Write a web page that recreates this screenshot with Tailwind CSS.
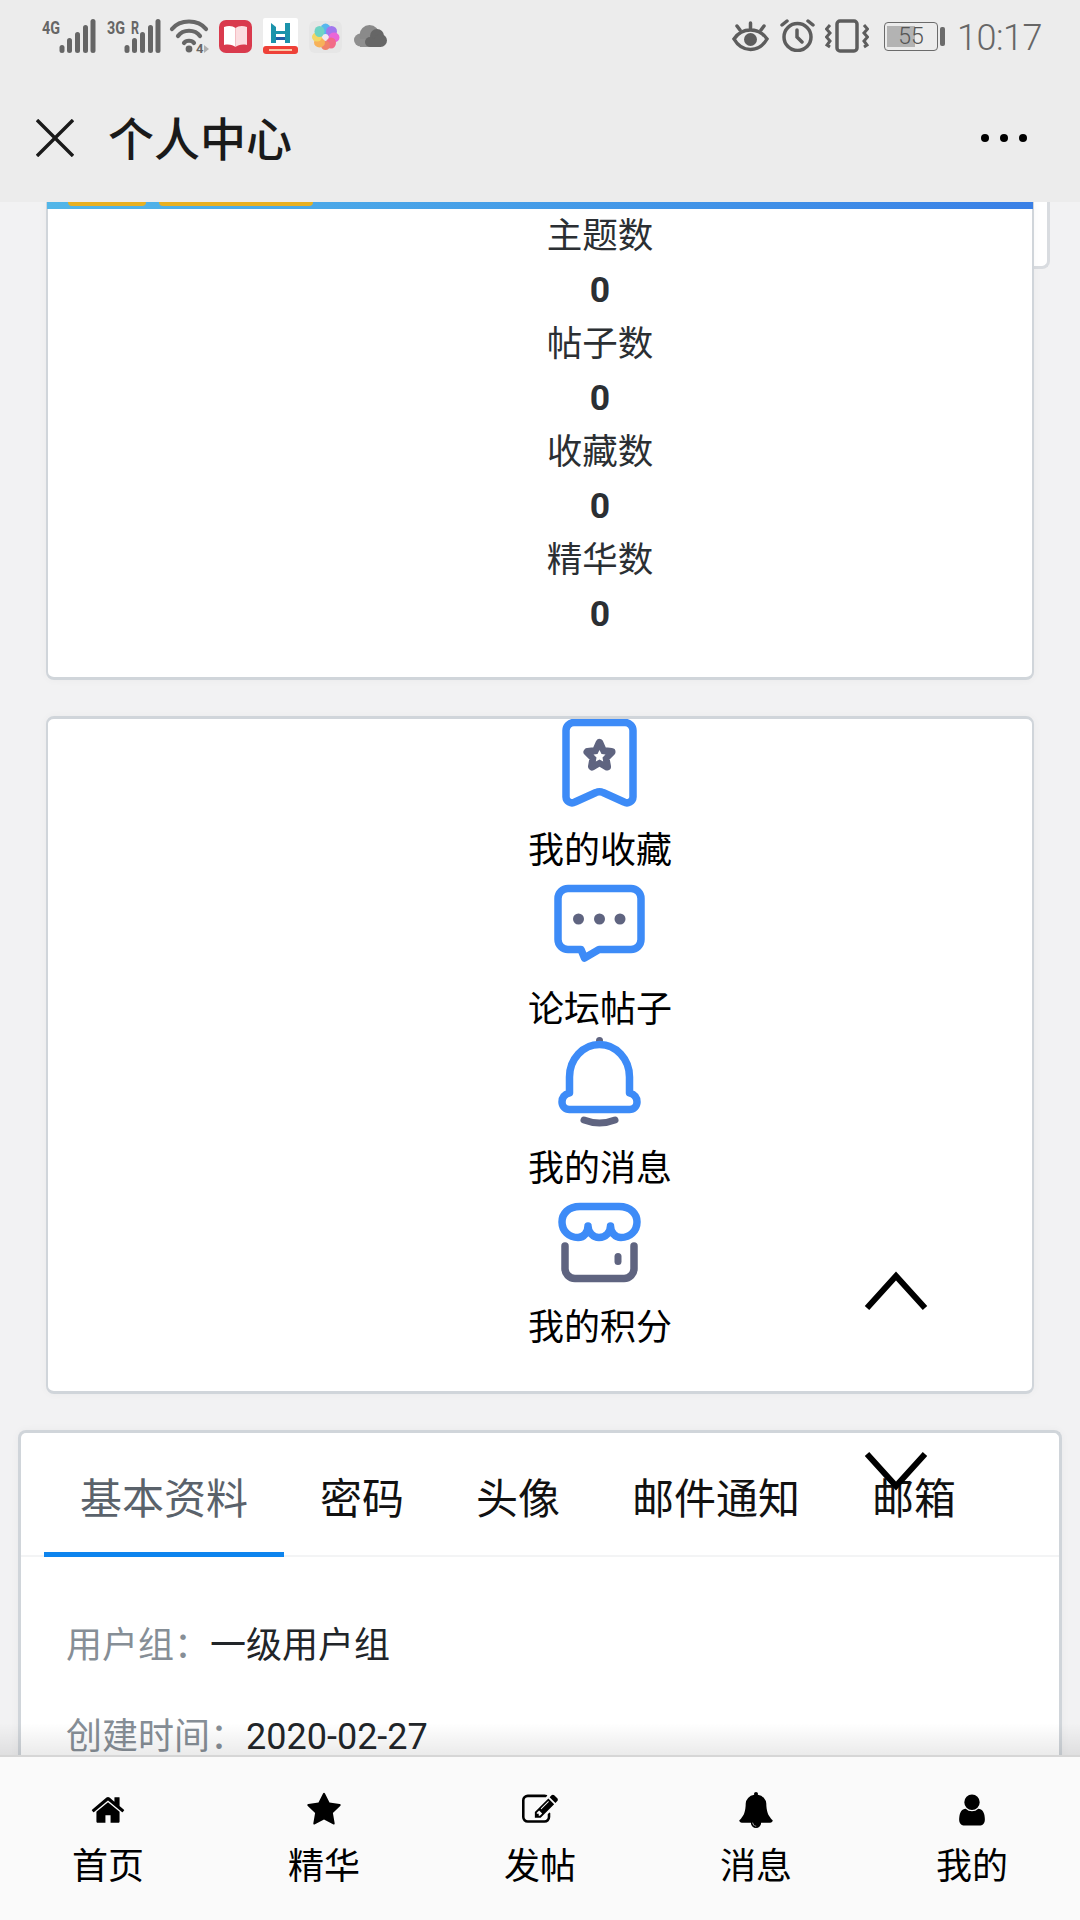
<!doctype html>
<html lang="zh">
<head>
<meta charset="utf-8">
<script src="https://cdn.jsdelivr.net/npm/@tailwindcss/browser@4"></script>
</head>
<body class="m-0">
<div class="relative w-[1080px] h-[1920px] overflow-hidden flex flex-col bg-[#f2f2f3] font-['Roboto','Noto_Sans_CJK_SC',sans-serif]">

  <!-- header -->
  <header class="shrink-0 h-[202px] bg-[#ececec] flex flex-col">
    <div class="h-[72px] flex items-start justify-between pt-[19px] pl-[42px] pr-[38px]">
      <div class="flex items-start">
        <svg class="block overflow-visible" width="54" height="34" viewBox="0 0 54 34" fill="#666"><text x="0" y="14.500" font-size="19" font-weight="700" textLength="18" lengthAdjust="spacingAndGlyphs" font-family="Roboto">4G</text><rect x="17.500" y="26" width="5" height="8" rx="2.500"/><rect x="25" y="19" width="5" height="15" rx="2.500"/><rect x="33" y="13" width="5" height="21" rx="2.500"/><rect x="41" y="6" width="5" height="28" rx="2.500"/><rect x="48.500" y="0" width="5" height="34" rx="2.500"/></svg>
        <svg class="block ml-[11px] overflow-visible" width="53" height="34" viewBox="0 0 53 34" fill="#666"><text x="0" y="14.500" font-size="19" font-weight="700" textLength="18" lengthAdjust="spacingAndGlyphs" font-family="Roboto">3G</text><text x="24" y="14.500" font-size="18" font-weight="700" textLength="8" lengthAdjust="spacingAndGlyphs" font-family="Roboto">R</text><rect x="17.500" y="26" width="5" height="8" rx="2.500"/><rect x="25" y="19" width="5" height="15" rx="2.500"/><rect x="33" y="13" width="5" height="21" rx="2.500"/><rect x="41" y="6" width="5" height="28" rx="2.500"/><rect x="48.500" y="0" width="5" height="34" rx="2.500"/></svg>
        <svg class="block ml-[10px] overflow-visible" width="40" height="34" viewBox="0 0 40 34" fill="none" stroke="#666" stroke-width="4.200" stroke-linecap="round"><path d="M2 10 C10 0 28 0 36 10"/><path d="M8 17 C13 10 25 10 30 17"/><path d="M14 24 C16 21 22 21 24 24"/><circle cx="19" cy="30" r="3.400" fill="#666" stroke="none"/><text x="26" y="33.500" font-size="13" font-weight="700" fill="#666" stroke="none" font-family="Roboto">4</text><path d="M34 26 L39 30 L34 34Z" fill="#b0b0b0" stroke="none"/></svg>
        <svg class="block ml-[9px] mt-[1px]" width="33" height="33" viewBox="0 0 33 33"><rect width="33" height="33" rx="7" fill="#d93a4d"/><path d="M5 7 C10 5 14 6 16.500 8 V27 C14 25 10 24 5 25Z" fill="#fff"/><path d="M16.500 8 C19 6 23 5 28 7 V25 C23 24 19 25 16.500 27Z" fill="#fbdde0"/></svg>
        <svg class="block ml-[11px] -mt-[1px]" width="35" height="36" viewBox="0 0 35 36"><rect width="35" height="36" rx="2" fill="#fff"/><path d="M8 5 L13 9 V25 H8Z M22 5 H27 V25 H22Z M13 13 H22 V16 H13Z" fill="#1b93ab"/><path d="M13 19 H22 V22 H13Z" fill="#1f5fa8"/><rect y="28" width="35" height="8" rx="3" fill="#ee4138"/><rect x="6" y="31" width="23" height="2" fill="#f8c9a8"/></svg>
        <svg class="block ml-[11px] mt-[2px]" width="33" height="32" viewBox="0 0 33 32"><rect width="33" height="32" rx="6" fill="#e6e6e6"/><ellipse cx="16.500" cy="8.500" rx="5" ry="6" fill="#58b7ee"/><ellipse cx="22.500" cy="10.500" rx="5.500" ry="5.500" fill="#a277ee"/><ellipse cx="25" cy="16.500" rx="5.500" ry="5" fill="#ea66d8"/><ellipse cx="22" cy="22" rx="5" ry="5.500" fill="#f26b88"/><ellipse cx="16.500" cy="24.500" rx="4.500" ry="4.500" fill="#f0826a"/><ellipse cx="10.500" cy="21.500" rx="5.500" ry="5" fill="#f7b25a"/><ellipse cx="8" cy="16" rx="5" ry="4.500" fill="#f4d766"/><ellipse cx="10.500" cy="10.500" rx="5" ry="5.500" fill="#6fd3c4"/><circle cx="16.500" cy="16" r="3" fill="#f3e8f0"/></svg>
        <svg class="block ml-[12px] mt-[6px]" width="33" height="22" viewBox="0 0 33 22"><circle cx="6.500" cy="15" r="6.500" fill="#8f8f8f"/><circle cx="15.500" cy="10" r="10" fill="#8a8a8a"/><rect x="6" y="14" width="14" height="8" fill="#8f8f8f"/><circle cx="23" cy="11" r="7" fill="#666"/><circle cx="26.500" cy="15.500" r="6.500" fill="#666"/><circle cx="16" cy="17" r="5" fill="#666"/><rect x="16" y="14" width="11" height="8" fill="#666"/></svg>
      </div>
      <div class="flex items-start">
        <svg class="block mt-[2px]" width="37" height="32" viewBox="0 0 37 32" fill="none" stroke="#5d5d5d" stroke-width="3.500" stroke-linecap="round"><path d="M2 18 C10 6 27 6 35 18 C27 32 10 32 2 18Z"/><circle cx="18.500" cy="18.500" r="6.500" fill="#5d5d5d" stroke="none"/><path d="M18.500 2 V7 M5 5 L8 9 M32 5 L29 9"/></svg>
        <svg class="block ml-[11px]" width="35" height="33" viewBox="0 0 35 33" fill="none" stroke="#5d5d5d" stroke-width="3.500" stroke-linecap="round"><circle cx="17.500" cy="18" r="13.500"/><path d="M17 11 V18 L22 23 M2 6 L7 2 M33 6 L28 2"/></svg>
        <svg class="block ml-[10px]" width="44" height="34" viewBox="0 0 44 34" fill="none" stroke="#5d5d5d" stroke-width="3"><rect x="12" y="2" width="20" height="30" rx="3" stroke-width="3.500"/><path d="M5 6 L1.500 10 L5 14 L1.500 18 L5 22 L2 26 L5 28 M39 6 L42.500 10 L39 14 L42.500 18 L39 22 L42 26 L39 28"/></svg>
        <div class="ml-[15px] mt-[3px] relative w-[54px] h-[29px] rounded-[4px] border-[1.500px] border-[#6b6b6b] flex items-center justify-center">
          <div class="absolute left-[2px] top-[3px] bottom-[3px] w-[28px] bg-[#b3b3b3]"></div>
          <span class="relative text-[23px] leading-none font-light text-[#555]">55</span>
        </div>
        <div class="ml-[2px] mt-[8px] w-[5px] h-[19px] rounded-[2px] bg-[#6b6b6b]"></div>
        <span class="ml-[12px] mt-[-1px] text-[36px] leading-[40px] font-light text-[#666] tracking-[-0.500px]">10:17</span>
      </div>
    </div>
    <div class="flex-1 flex items-start pl-[36px] pr-[38px] pt-[47px] relative">
      <svg class="block" width="38" height="38" viewBox="0 0 38 38" fill="none" stroke="#1a1a1a" stroke-width="3.400"><path d="M1 1 L37 37 M37 1 L1 37"/></svg>
      <h1 class="ml-[34px] -mt-[7px] text-[46px] leading-[56px] font-medium text-[#1a1a1a]">个人中心</h1>
      <div class="ml-auto mt-[15px] flex gap-[11px] pr-[15px]">
        <span class="w-[8px] h-[8px] rounded-full bg-black"></span>
        <span class="w-[8px] h-[8px] rounded-full bg-black"></span>
        <span class="w-[8px] h-[8px] rounded-full bg-black"></span>
      </div>
    </div>
  </header>

  <!-- scrolled page -->
  <main class="relative flex-1 min-h-0 overflow-hidden">
    <!-- sliver of card behind -->
    <div class="absolute left-[1020px] top-0 w-[30px] h-[67px] bg-white border-r-[3px] border-b-[3px] border-[#d9dce0] rounded-br-[8px]"></div>

    <section class="relative mx-[46px] border-x-[2px] border-b-[3px] border-[#d0d5da] rounded-b-[8px] bg-white pb-[36px] pl-[120px] shadow-[0_0_8px_rgba(0,0,0,0.04)]">
      <div class="relative h-[7px] -ml-[121px] -mr-[1px] bg-gradient-to-r from-[#52b6e8] to-[#3a80e6]">
        <span class="absolute left-[21px] top-0 w-[78px] h-[4px] rounded-b-[4px] bg-[#e8b021]"></span>
        <span class="absolute left-[112px] top-0 w-[154px] h-[4px] rounded-b-[4px] bg-[#e8b021]"></span>
      </div>
      <div class="text-center text-[35.500px] leading-[54px] text-[#2b2f33]">
        <div>主题数</div><div class="font-bold">0</div>
        <div>帖子数</div><div class="font-bold">0</div>
        <div>收藏数</div><div class="font-bold">0</div>
        <div>精华数</div><div class="font-bold">0</div>
      </div>
    </section>

    <section class="mx-[46px] mt-[36px] border-x-[2px] border-y-[3px] border-[#d0d5da] rounded-[8px] bg-white pb-[36px] pl-[120px] flex flex-col items-center text-[36px] leading-[54px] text-black shadow-[0_0_8px_rgba(0,0,0,0.04)]">
      <div class="flex flex-col items-center">
        <svg class="block" width="105" height="105" viewBox="0 0 105 105" fill="none" stroke-linecap="round" stroke-linejoin="round"><path d="M27 3.500 H78 a8 8 0 0 1 8 8 V78 a6 6 0 0 1 -9 5 L56 73.500 a8 8 0 0 0 -7 0 L28 83 a6 6 0 0 1 -9 -5 V11.500 a8 8 0 0 1 8 -8z" stroke="#3d8bf7" stroke-width="7.500"/><path d="M52.500 24 L56 32 L64.500 33 L58.500 39 L60 47.500 L52.500 43 L45 47.500 L46.500 39 L40.500 33 L49 32Z" fill="#5f6480" stroke="#5f6480" stroke-width="8"/><path d="M52.500 31 L54.500 35 L58.500 35.500 L55.500 38.500 L56.200 42.500 L52.500 40.500 L48.800 42.500 L49.500 38.500 L46.500 35.500 L50.500 35Z" fill="#fff"/></svg>
        <span>我的收藏</span>
      </div>
      <div class="flex flex-col items-center">
        <svg class="block" width="105" height="105" viewBox="0 0 105 105" fill="none" stroke-linecap="round" stroke-linejoin="round"><path d="M21 10.500 H84 a10 10 0 0 1 10 10 V61.500 a10 10 0 0 1 -10 10 H52 L37.500 80 L34 71.500 H21 a10 10 0 0 1 -10 -10 V20.500 a10 10 0 0 1 10 -10z" stroke="#3d8bf7" stroke-width="7.500"/><circle cx="31.500" cy="41" r="5.500" fill="#5f6480"/><circle cx="52.500" cy="41" r="5.500" fill="#5f6480"/><circle cx="73" cy="41" r="5.500" fill="#5f6480"/></svg>
        <span>论坛帖子</span>
      </div>
      <div class="flex flex-col items-center">
        <svg class="block" width="105" height="105" viewBox="0 0 105 105" fill="none" stroke-linecap="round" stroke-linejoin="round"><circle cx="52.500" cy="3.500" r="3.500" fill="#5f6480"/><path d="M22.500 56 V40 A30 32.500 0 0 1 82.500 40 V56 Q90 58 90 65 A7.500 7.500 0 0 1 82.500 72.500 H22.500 A7.500 7.500 0 0 1 15 65 Q15 58 22.500 56 Z" stroke="#3d8bf7" stroke-width="7.500"/><path d="M37 83 Q52.500 89 68 83" stroke="#5f6480" stroke-width="7"/></svg>
        <span>我的消息</span>
      </div>
      <div class="flex flex-col items-center">
        <svg class="block" width="105" height="105" viewBox="0 0 105 105" fill="none" stroke-linecap="round" stroke-linejoin="round"><path d="M33 10.500 H72 C84 10.500 90 18 90 26 C90 35 83 41.500 74 41.500 C68 41.500 63.500 36 63.500 30 C63.500 36 59 41.500 52 41.500 C46 41.500 41 36 41 30 C41 36 37 41.500 31 41.500 C22 41.500 15 35 15 26 C15 18 21 10.500 33 10.500 Z" stroke="#3d8bf7" stroke-width="7.500"/><path d="M18 50 V72 a10 10 0 0 0 10 10.500 H77 a10 10 0 0 0 10 -10.500 V50" stroke="#5f6480" stroke-width="7.500"/><path d="M71 60.500 V65.500" stroke="#5f6480" stroke-width="7"/></svg>
        <span>我的积分</span>
      </div>
    </section>

    <section class="mx-[18px] mt-[36px] border-x-[3px] border-t-[3px] border-[#d0d5da] rounded-t-[8px] bg-white h-[400px] shadow-[0_0_8px_rgba(0,0,0,0.04)]">
      <div class="flex pl-[23px] pt-[35px] border-b-2 border-[#f3f4f5] text-[42px] leading-[63px] text-[#111]">
        <div class="px-[36px] pb-[21px] -mb-[2px] border-b-[5px] border-[#0d84ee] text-[#5a626b]">基本资料</div>
        <div class="px-[36px] pb-[21px]">密码</div>
        <div class="px-[36px] pb-[21px]">头像</div>
        <div class="px-[36px] pb-[21px]">邮件通知</div>
        <div class="px-[36px] pb-[21px]">邮箱</div>
      </div>
      <div class="pl-[45px] pt-[62px] flex flex-col gap-[37px] text-[36px] leading-[54px] text-[#212529]">
        <div><span class="text-[#868e96]">用户组：</span>一级用户组</div>
        <div><span class="text-[#868e96]">创建时间：</span>2020-02-27</div>
      </div>
    </section>

    <div class="absolute left-0 right-0 bottom-0 h-[32px] bg-gradient-to-b from-black/0 to-black/8"></div>
  </main>

  <!-- tab bar -->
  <nav class="shrink-0 h-[165px] border-t-[2px] border-[#d6d6d6] bg-[#fafafa] flex text-[36px] leading-[52px] text-black">
    <a class="flex-1 flex flex-col items-center pt-[35px]">
      <svg class="block" width="36" height="36" viewBox="0 0 1792 1792" fill="#000"><path d="M1472 992v480q0 26-19 45t-45 19h-384v-384h-256v384h-384q-26 0-45-19t-19-45v-480q0-1 .5-3t.5-3l575-474 575 474q1 2 1 6zm223-69l-62 74q-8 9-21 11h-3q-13 0-21-7l-692-577-692 577q-12 8-24 7-13-2-21-11l-62-74q-8-10-7-23.500t11-21.500l719-599q32-26 76-26t76 26l244 204v-195q0-14 9-23t23-9h192q14 0 23 9t9 23v408l219 182q10 8 11 21.500t-7 23.500z"/></svg>
      <span class="mt-[13px]">首页</span>
    </a>
    <a class="flex-1 flex flex-col items-center pt-[35px]">
      <svg class="block" width="36" height="36" viewBox="0 0 1792 1792" fill="#000"><path d="M1728 647q0 22-26 48l-363 354 86 500q1 7 1 20 0 21-10.500 35.500t-30.500 14.500q-19 0-40-12l-449-236-449 236q-22 12-40 12-21 0-31.500-14.500t-10.500-35.500q0-6 2-20l86-500-364-354q-25-27-25-48 0-37 56-46l502-73 225-455q19-41 49-41t49 41l225 455 502 73q56 9 56 46z"/></svg>
      <span class="mt-[13px]">精华</span>
    </a>
    <a class="flex-1 flex flex-col items-center pt-[35px]">
      <svg class="block" width="36" height="36" viewBox="0 0 1792 1792" fill="#000"><path d="M888 1184l116-116-152-152-116 116v56h96v96h56zm440-720q-16-16-33 1l-350 350q-17 17-1 33t33-1l350-350q17-17 1-33zm80 594v190q0 119-84.500 203.500t-203.500 84.500h-832q-119 0-203.500-84.500t-84.500-203.500v-832q0-119 84.500-203.500t203.500-84.500h832q63 0 117 25 15 7 18 23 3 17-9 29l-49 49q-14 14-32 8-23-6-45-6h-832q-66 0-113 47t-47 113v832q0 66 47 113t113 47h832q66 0 113-47t47-113v-126q0-13 9-22l64-64q15-15 35-7t20 29zm-96-738l288 288-672 672h-288v-288zm444 132l-92 92-288-288 92-92q28-28 68-28t68 28l152 152q28 28 28 68t-28 68z"/></svg>
      <span class="mt-[13px]">发帖</span>
    </a>
    <a class="flex-1 flex flex-col items-center pt-[35px]">
      <svg class="block" width="36" height="36" viewBox="0 0 1792 1792" fill="#000"><path d="M912 1696q0-16-16-16-59 0-101.500-42.500t-42.500-101.500q0-16-16-16t-16 16q0 73 51.500 124.500t124.500 51.500q16 0 16-16zm816-288q0 52-38 90t-90 38h-448q0 106-75 181t-181 75-181-75-75-181h-448q-52 0-90-38t-38-90q50-42 91-88t85-119.500 74.500-158.500 50-206 19.500-260q0-152 117-282.500t307-158.500q-8-19-8-39 0-40 28-68t68-28 68 28 28 68q0 20-8 39 190 28 307 158.500t117 282.500q0 139 19.500 260t50 206 74.500 158.500 85 119.500 91 88z"/></svg>
      <span class="mt-[13px]">消息</span>
    </a>
    <a class="flex-1 flex flex-col items-center pt-[35px]">
      <svg class="block" width="36" height="36" viewBox="0 0 1792 1792" fill="#000"><path d="M1536 1399q0 109-62.500 187t-150.500 78h-854q-88 0-150.500-78t-62.500-187q0-85 8.500-160.500t31.500-152 58.500-131 94-89 134.500-34.500q131 128 313 128t313-128q76 0 134.500 34.500t94 89 58.500 131 31.500 152 8.500 160.500zm-256-887q0 159-112.500 271.500t-271.500 112.500-271.500-112.500-112.500-271.500 112.500-271.500 271.500-112.500 271.500 112.500 112.500 271.500z"/></svg>
      <span class="mt-[13px]">我的</span>
    </a>
  </nav>

  <!-- carousel arrows lying over the content -->
  <svg class="absolute left-[864px] top-[1271px] blur-[0.7px]" width="64" height="40" viewBox="0 0 64 40" fill="none" stroke="#000" stroke-width="6"><path d="M3 37 L32 5 L61 37"/></svg>
  <svg class="absolute left-[864px] top-[1451px] blur-[0.7px]" width="64" height="40" viewBox="0 0 64 40" fill="none" stroke="#000" stroke-width="6"><path d="M3 3 L32 35 L61 3"/></svg>
</div>
</body>
</html>
